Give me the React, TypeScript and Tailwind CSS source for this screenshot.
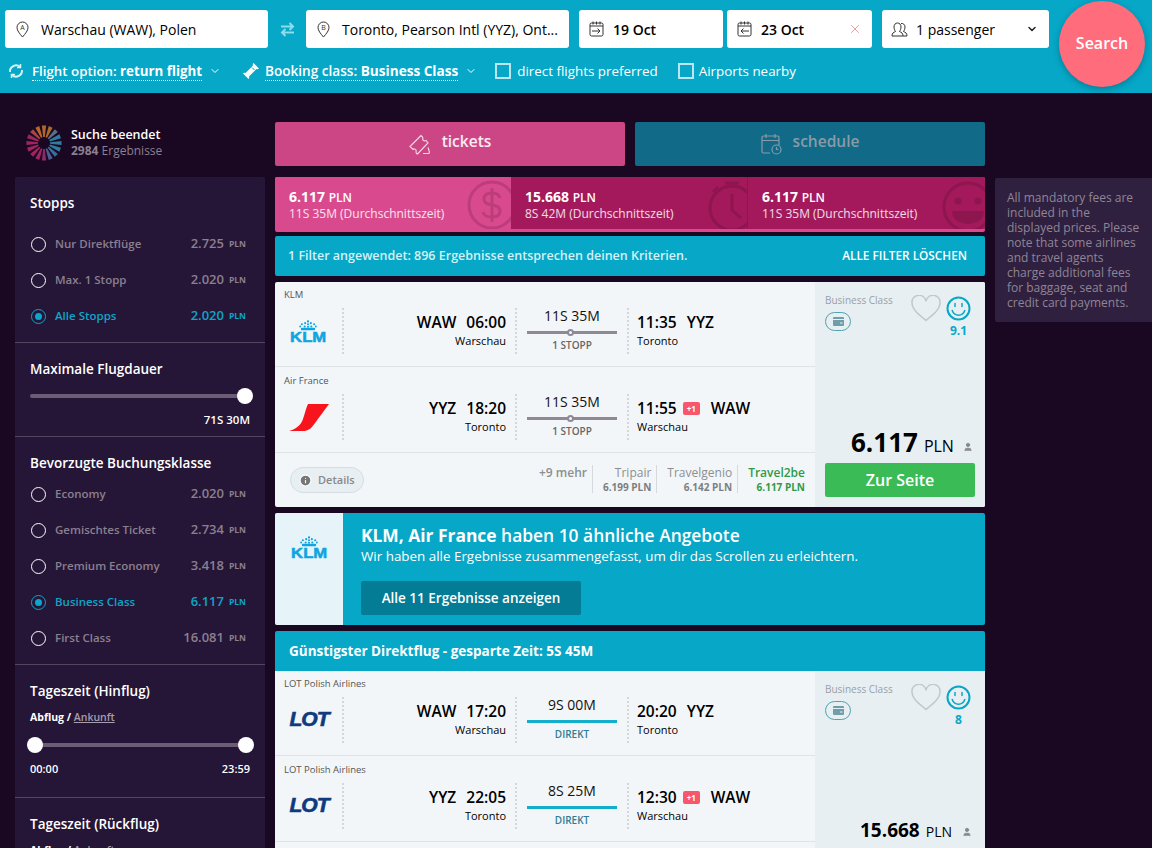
import React from "react";
import { ChevronDown, X, User, Info } from "lucide-react";

// Small inline icons
const Pin = ({ letter }: { letter: string }) => (
  <svg width="13" height="17" viewBox="0 0 13 17" className="shrink-0" fill="none">
    <path d="M6.5 16C3.5 12.5 1 9.6 1 6.5a5.5 5.5 0 0 1 11 0c0 3.1-2.500 6-5.500 9.500z" stroke="#333" strokeWidth="1" />
    <text x="6.500" y="9" textAnchor="middle" fontSize="7" fill="#333" fontFamily="Open Sans, sans-serif">{letter}</text>
  </svg>
);

const CalendarArrow = ({ back }: { back?: boolean }) => (
  <svg width="15" height="16" viewBox="0 0 15 16" fill="none" stroke="#333" strokeWidth="1" className="shrink-0">
    <rect x="1" y="2" width="13" height="13" rx="1.500" />
    <path d="M1 5h13M4 0.500v3M7.500 0.500v3M11 0.500v3" />
    {back ? <path d="M12 10H4M6.500 7.500 4 10l2.500 2.500" /> : <path d="M3 10h8M8.500 7.500 11 10l-2.500 2.500" />}
  </svg>
);

const Checkbox = () => <span className="w-[16px] h-[16px] border-2 border-[#b9e6f0] shrink-0" />;

const Heart = () => (
  <svg width="30" height="27" viewBox="0 0 30 27" fill="none" stroke="#c4c8cb" strokeWidth="1.500">
    <path d="M15 25.500C8 19.500 1 14.500 1 8a7 7 0 0 1 14-1.500A7 7 0 0 1 29 8c0 6.500-7 11.500-14 17.500z" />
  </svg>
);

const Smile = () => (
  <svg width="25" height="25" viewBox="0 0 25 25" fill="none" stroke="#08a7c8" strokeWidth="2">
    <circle cx="12.500" cy="12.500" r="11" />
    <path d="M6 14c1.200 3.600 3.600 5.200 6.500 5.200s5.300-1.600 6.500-5.200" strokeWidth="1.500" />
    <path d="M9 7.500v3M16 7.500v3" strokeWidth="1.500" strokeLinecap="round" />
  </svg>
);

const Spinner = () => {
  const colors = ["#b5662a", "#a86a2c", "#5c6f86", "#2f7ca0", "#2f7ca0", "#2f7ca0", "#35719a", "#4d5f90", "#8c2a6b", "#a0255f", "#a0255f", "#a0255f", "#a0255f", "#96285f", "#a8483f", "#b5662a"];
  return (
    <svg width="36" height="36" viewBox="0 0 36 36" className="shrink-0">
      {colors.map((c, i) => (
        <path key={i} d="M15.900 0.500h4.200l-1.300 11.500h-1.600z" fill={c} transform={`rotate(${i * 22.500} 18 18)`} />
      ))}
    </svg>
  );
};

const KlmLogo = () => (
  <div className="flex flex-col items-center text-[#0ea5e0]">
    <svg width="18" height="11" viewBox="0 0 19 11" fill="#0ea5e0">
      <rect x="2" y="8" width="15" height="2.500" rx="1" />
      <circle cx="9.500" cy="1.200" r="1.200" />
      <circle cx="6.500" cy="3" r="1.100" />
      <circle cx="12.500" cy="3" r="1.100" />
      <circle cx="9.500" cy="4.200" r="1.100" />
      <circle cx="3" cy="4.200" r="1.100" />
      <circle cx="16" cy="4.200" r="1.100" />
      <circle cx="1.200" cy="6.500" r="1" />
      <circle cx="17.800" cy="6.500" r="1" />
      <circle cx="6" cy="6.500" r="1.100" />
      <circle cx="13" cy="6.500" r="1.100" />
      <circle cx="9.500" cy="6.800" r="1.100" />
    </svg>
    <span className="text-[14px] leading-[11px] mt-[1px] font-bold font-['Liberation_Sans',sans-serif] scale-x-[1.190] [-webkit-text-stroke:0.5px_#0ea5e0]">KLM</span>
  </div>
);

const AirFranceLogo = () => (
  <svg width="41" height="29" viewBox="0 0 41 29">
    <path d="M20 1H41L27 20C23 26 20 28 15 28H1C8 26 13 22 15 16C17 10 18 5 20 1z" fill="#f8141c" />
  </svg>
);

const LotLogo = () => (
  <span className="text-[#0f3a7e] text-[19.500px] leading-none font-bold italic font-['Liberation_Sans',sans-serif] tracking-[-1px] scale-x-[1.080] inline-block [-webkit-text-stroke:0.6px_#0f3a7e]">LOT</span>
);

function RadioRow({ label, price, active }: { label: string; price: string; active?: boolean }) {
  return (
    <div className={`flex items-center h-[36px] pr-[4px] ${active ? "text-[#0ba6c9]" : "text-[#8a808f]"}`}>
      <span className={`ml-[1px] w-[15px] h-[15px] rounded-full border flex items-center justify-center shrink-0 ${active ? "border-[#0ba6c9]" : "border-white"}`}>
        {active && <span className="w-[7px] h-[7px] rounded-full bg-[#0ba6c9]" />}
      </span>
      <span className="ml-[9px] text-[11.500px] font-semibold flex-1">{label}</span>
      <span className="text-[13px] font-semibold">{price}</span>
      <span className="ml-[5px] text-[8.500px] font-bold">PLN</span>
    </div>
  );
}

function Slider({ left }: { left?: boolean }) {
  return (
    <div className="relative h-[4px] bg-[#6b5d76] rounded-full">
      {left && <span className="absolute left-[-8px] top-[-6px] w-[16px] h-[16px] rounded-full bg-white" />}
      <span className="absolute right-[-8px] top-[-6px] w-[16px] h-[16px] rounded-full bg-white" />
    </div>
  );
}

function Sidebar() {
  return (
    <aside className="w-[250px] shrink-0">
      <div className="h-[55px] flex items-start pl-[11px] pt-[3px]">
        <Spinner />
        <div className="ml-[9px] text-[12px] leading-[16px] pt-[2px]">
          <p className="text-white text-[12.500px] font-semibold">Suche beendet</p>
          <p className="text-[#8a808f]"><span className="font-bold">2984</span> Ergebnisse</p>
        </div>
      </div>
      <div className="bg-[#251537] rounded-[2px] text-white">
        <section className="h-[166px] px-[15px] pt-[16px] border-b border-[#54465f]">
          <h3 className="text-[13.500px] leading-[20px] font-semibold mb-[13px]">Stopps</h3>
          <RadioRow label="Nur Direktflüge" price="2.725" />
          <RadioRow label="Max. 1 Stopp" price="2.020" />
          <RadioRow label="Alle Stopps" price="2.020" active />
        </section>
        <section className="h-[94px] px-[15px] pt-[16px] border-b border-[#54465f]">
          <h3 className="text-[13.500px] leading-[20px] font-semibold mb-[15px]">Maximale Flugdauer</h3>
          <div className="mr-[5px]"><Slider /></div>
          <p className="text-[11.500px] leading-[14px] font-semibold text-right mt-[15px]">71S 30M</p>
        </section>
        <section className="h-[228px] px-[15px] pt-[16px] border-b border-[#54465f]">
          <h3 className="text-[13.500px] leading-[20px] font-semibold mb-[3px]">Bevorzugte Buchungsklasse</h3>
          <RadioRow label="Economy" price="2.020" />
          <RadioRow label="Gemischtes Ticket" price="2.734" />
          <RadioRow label="Premium Economy" price="3.418" />
          <RadioRow label="Business Class" price="6.117" active />
          <RadioRow label="First Class" price="16.081" />
        </section>
        <section className="h-[133px] px-[15px] pt-[16px] border-b border-[#54465f]">
          <h3 className="text-[13.500px] leading-[20px] font-semibold mb-[9px]">Tageszeit (Hinflug)</h3>
          <p className="text-[10.500px] leading-[14px] font-bold">Abflug / <span className="font-semibold text-[#a79dad] underline">Ankunft</span></p>
          <div className="mt-[19px] ml-[5px] mr-[4px]"><Slider left /></div>
          <div className="flex justify-between text-[11px] leading-[14px] font-semibold mt-[15px]">
            <span>00:00</span>
            <span>23:59</span>
          </div>
        </section>
        <section className="h-[80px] px-[15px] pt-[16px]">
          <h3 className="text-[13.500px] leading-[20px] font-semibold mb-[9px]">Tageszeit (Rückflug)</h3>
          <p className="text-[10.500px] leading-[14px] font-bold">Abflug / <span className="font-semibold text-[#a79dad] underline">Ankunft</span></p>
        </section>
      </div>
    </aside>
  );
}

type Leg = {
  airline: string;
  logo: React.ReactNode;
  from: string;
  dep: string;
  fromCity: string;
  duration: string;
  stop: boolean;
  arr: string;
  plus?: boolean;
  to: string;
  toCity: string;
};

function FlightRow({ leg }: { leg: Leg }) {
  return (
    <div className="h-[86px] pt-[9px] first:h-[85px] first:pt-[8px] border-b border-[#dfe3e6]">
      <p className="pl-[9px] text-[9.500px] leading-[10px] text-[#555]">{leg.airline}</p>
      <div className="flex h-[46px] mt-[8px]">
        <div className="w-[69px] shrink-0 border-r-2 border-dotted border-[#d3d7da] flex items-center justify-center">{leg.logo}</div>
        <div className="w-[173px] shrink-0 border-r-2 border-dotted border-[#d3d7da] pr-[9px] text-right text-black">
          <p className="text-[15.500px] leading-[22px] font-semibold mt-[3px]">
            {leg.from}<span className="ml-[10px]">{leg.dep}</span>
          </p>
          <p className="text-[11px] leading-[15px]">{leg.fromCity}</p>
        </div>
        <div className="w-[112px] shrink-0 border-r-2 border-dotted border-[#d3d7da] flex flex-col items-center">
          <p className="text-[14px] leading-[18px] text-[#111] mt-[-1px]">{leg.duration}</p>
          <div className={`relative w-[90px] h-[3px] mt-[6px] ${leg.stop ? "bg-[#8f8896]" : "bg-[#13aecb]"}`}>
            {leg.stop && <span className="absolute left-[40px] top-[-2px] w-[7px] h-[7px] rounded-full border-2 border-[#8f8896] bg-[#f3f6f8]" />}
          </div>
          <p className={`text-[10px] leading-[12px] font-semibold mt-[5px] ${leg.stop ? "text-[#666]" : "text-[#2f7d94]"}`}>
            {leg.stop ? "1 STOPP" : "DIREKT"}
          </p>
        </div>
        <div className="pl-[8px] text-black">
          <p className="text-[15.500px] leading-[22px] font-semibold mt-[3px] flex items-center">
            {leg.arr}
            {leg.plus && <span className="ml-[6px] w-[17px] h-[13px] bg-[#f8566b] rounded-[2px] text-white text-[8px] leading-[13px] font-bold text-center">+1</span>}
            <span className={leg.plus ? "ml-[11px]" : "ml-[10px]"}>{leg.to}</span>
          </p>
          <p className="text-[11px] leading-[15px]">{leg.toCity}</p>
        </div>
      </div>
    </div>
  );
}

function PricePanel({ score, children }: { score: string; children: React.ReactNode }) {
  return (
    <div className="flex-1 bg-[#e8eff3] relative px-[10px] pt-[12px]">
      <p className="text-[10px] leading-[13px] text-[#9a9fa3]">Business Class</p>
      <div className="mt-[5px] w-[26px] h-[19px] rounded-full border border-[#4fa3ad] flex items-center justify-center">
        <svg width="11" height="9" viewBox="0 0 11 9">
          <rect width="11" height="9" rx="1" fill="#6f9ea8" />
          <path d="M0 2.500h11" stroke="#e8eff3" strokeWidth="1" />
          <path d="M7 6h2.500" stroke="#e8eff3" strokeWidth="1" />
        </svg>
      </div>
      <div className="absolute top-[13px] left-[96px]"><Heart /></div>
      <div className="absolute top-[14px] left-[131px] flex flex-col items-center">
        <Smile />
        <span className="text-[12px] leading-[15px] font-bold text-[#08a7c8] mt-[2px]">{score}</span>
      </div>
      {children}
    </div>
  );
}

function Vendor({ name, price, best }: { name: string; price: string; best?: boolean }) {
  return (
    <div className={`flex flex-col items-end h-[28px] ${best ? "text-[#2f9a4a] font-semibold" : "pr-[5px] border-r border-[#d6dadd] text-[#8b8f92]"}`}>
      <span className="text-[12px] leading-[15px]">{name}</span>
      <span className={`text-[10px] leading-[14px] font-bold ${best ? "" : "text-[#7c7f82]"}`}>{price}</span>
    </div>
  );
}

export default function App() {
  const klmLegs: Leg[] = [
    { airline: "KLM", logo: <KlmLogo />, from: "WAW", dep: "06:00", fromCity: "Warschau", duration: "11S 35M", stop: true, arr: "11:35", to: "YYZ", toCity: "Toronto" },
    { airline: "Air France", logo: <AirFranceLogo />, from: "YYZ", dep: "18:20", fromCity: "Toronto", duration: "11S 35M", stop: true, arr: "11:55", plus: true, to: "WAW", toCity: "Warschau" },
  ];
  const lotLegs: Leg[] = [
    { airline: "LOT Polish Airlines", logo: <LotLogo />, from: "WAW", dep: "17:20", fromCity: "Warschau", duration: "9S 00M", stop: false, arr: "20:20", to: "YYZ", toCity: "Toronto" },
    { airline: "LOT Polish Airlines", logo: <LotLogo />, from: "YYZ", dep: "22:05", fromCity: "Toronto", duration: "8S 25M", stop: false, arr: "12:30", plus: true, to: "WAW", toCity: "Warschau" },
  ];

  return (
    <div className="h-screen overflow-hidden bg-[#1a0823] font-['Open_Sans',sans-serif]">
      {/* Search header */}
      <header className="relative h-[93px] bg-[#06a7c7] pt-[10px] px-[5px]">
        <div className="flex items-center h-[38px] text-[14px] text-black">
          <div className="w-[263px] h-full bg-white rounded-[3px] flex items-center pl-[11px] gap-[12px]">
            <Pin letter="A" />
            <span>Warschau (WAW), Polen</span>
          </div>
          <div className="w-[38px] flex justify-center">
            <svg width="15" height="15" viewBox="0 0 15 15" fill="none" stroke="#8fdcec" strokeWidth="2">
              <path d="M1 4.500h12M9.500 1 13 4.500 9.500 8M14 10.500H2M5.500 7 2 10.500 5.500 14" />
            </svg>
          </div>
          <div className="w-[263px] h-full bg-white rounded-[3px] flex items-center pl-[11px] gap-[12px]">
            <Pin letter="B" />
            <span>Toronto, Pearson Intl (YYZ), Ont...</span>
          </div>
          <div className="ml-[10px] w-[144px] h-full bg-white rounded-[3px] flex items-center pl-[10px] gap-[9px] font-semibold">
            <CalendarArrow />
            <span>19 Oct</span>
          </div>
          <div className="ml-[4px] w-[145px] h-full bg-white rounded-[3px] flex items-center pl-[10px] pr-[10px] gap-[9px] font-semibold">
            <CalendarArrow back />
            <span className="flex-1">23 Oct</span>
            <X size={14} color="#d9594c" strokeWidth={1} />
          </div>
          <div className="ml-[10px] w-[167px] h-full bg-white rounded-[3px] flex items-center pl-[9px] pr-[11px] gap-[8px]">
            <svg width="17" height="15" viewBox="0 0 17 15" fill="none" stroke="#333" strokeWidth="1" className="shrink-0">
              <path d="M1 14c0-3 1.500-3.500 3.500-4.500C3.500 8 3 6.500 3 5c0-2.500 1.500-4 3.500-4S10 2.500 10 5c0 1.500-.5 3-1.500 4.500C10.500 10.500 12 11 12 14z" />
              <path d="M10 1.500c2-.5 4 1 4 3.500 0 1.500-.5 3-1.500 4.500 2 1 3.500 1.500 3.500 4.500h-4" />
            </svg>
            <span className="flex-1">1 passenger</span>
            <ChevronDown size={12} color="#222" strokeWidth={3} />
          </div>
        </div>

        <div className="flex items-center h-[22px] mt-[12px] text-white text-[13.400px]">
          <svg width="16" height="16" viewBox="0 0 16 16" fill="none" stroke="#d8f3f8" strokeWidth="2" className="ml-[3px] shrink-0">
            <path d="M2 9a6 6 0 0 1 10-5M14 7a6 6 0 0 1-10 5" />
            <path d="M12.500 1v3.500H9M3.500 15v-3.500H7" strokeWidth="1.500" />
          </svg>
          <span className="ml-[8px] text-[13.300px] font-semibold border-b border-dotted border-white leading-[18px]">Flight option: <span className="font-bold">return flight</span></span>
          <ChevronDown size={12} className="ml-[7px]" />
          <svg width="18" height="18" viewBox="0 0 18 18" className="ml-[21px] shrink-0">
            <path d="M11.500 1 17 6.500c-1 .8-1.500 1-2.500.5L7 14.500c.5 1 .3 1.700-.5 2.500L1 11.500c.8-.8 1.500-1 2.500-.5L11 3.500c-.5-1-.3-1.700.5-2.500z" fill="#f4fbfd" />
            <path d="M10 5.500l2.500 2.500" stroke="#06a7c7" strokeWidth="1" />
          </svg>
          <span className="ml-[5px] text-[13.600px] font-semibold border-b border-dotted border-white leading-[18px]">Booking class: <span className="font-bold">Business Class</span></span>
          <ChevronDown size={12} className="ml-[7px]" />
          <span className="ml-[18px] flex items-center"><Checkbox /></span>
          <span className="ml-[6px]">direct flights preferred</span>
          <span className="ml-[20px] flex items-center"><Checkbox /></span>
          <span className="ml-[5px]">Airports nearby</span>
        </div>

        <button className="absolute left-[1059px] top-[1px] w-[86px] h-[86px] rounded-full bg-[#ff6c7c] text-white text-[16px] font-semibold pb-[2px] shadow-[0_2px_6px_rgba(0,0,0,0.25)]">
          Search
        </button>
      </header>

      <main className="flex pt-[29px] pl-[15px]">
        <Sidebar />

        <div className="ml-[10px] w-[710px] shrink-0">
          {/* Tabs */}
          <div className="flex gap-[10px] h-[44px]">
            <div className="flex-1 bg-[#cc4585] rounded-[2px] flex items-center justify-center gap-[11px] text-white/90 text-[15.500px] font-semibold pb-[5px]">
              <svg width="22" height="21" viewBox="0 0 22 21" fill="none" stroke="#f3d5e3" strokeWidth="1.200" className="mt-[5px]">
                <path d="M12 1.500 1 12.500l3 3c1-1 2.500-.5 3 .5 .5 1-.5 2 .5 3.500l1 .5L19 9l-2-2.500c-1 .5-2.500.5-3-.5s0-2-.5-3z" />
                <path d="M14 19.500h6c.5-1 .5-2 0-3l-1-3" />
              </svg>
              tickets
            </div>
            <div className="flex-1 bg-[#106a88] rounded-[2px] flex items-center justify-center gap-[11px] text-[#8a9ba6] text-[15.500px] font-semibold pb-[5px]">
              <svg width="21" height="22" viewBox="0 0 21 22" fill="none" stroke="#8a9ba6" strokeWidth="1.200" className="mt-[5px]">
                <path d="M9 20H2.500A1.500 1.500 0 0 1 1 18.500V4.500A1.500 1.500 0 0 1 2.500 3h14A1.500 1.500 0 0 1 18 4.500V12M1 7.500h17M5 1v4M14 1v4" />
                <circle cx="15.500" cy="16.500" r="4.500" />
                <path d="M15.500 14v2.500h2" />
              </svg>
              schedule
            </div>
          </div>

          {/* Price summary */}
          <div className="mt-[11px] h-[55px] rounded-[2px] overflow-hidden flex bg-[#d84a8d] text-white pb-[3px]">
            <div className="relative w-[236px] bg-[#d84a8d] pl-[14px] pt-[11px] overflow-hidden">
              <p className="text-[14px] leading-[17px] font-bold">6.117 <span className="text-[12px] font-semibold">PLN</span></p>
              <p className="text-[12px] leading-[16px] text-white/85">11S 35M (Durchschnittszeit)</p>
              <svg width="50" height="50" viewBox="0 0 50 50" fill="none" stroke="#bd3d7a" strokeWidth="3" className="absolute left-[192px] top-[3px]">
                <circle cx="25" cy="25" r="23" />
                <path d="M33 18c-1-4-4-5-8-5-5 0-8 2-8 6s3 5 8 6 8 2 8 6-3 6-8 6-8-1-9-5M25 8v34" />
              </svg>
            </div>
            <div className="relative w-[237px] bg-[#a3195b] pl-[14px] pt-[11px] overflow-hidden border-r border-[#8e164f]">
              <p className="text-[14px] leading-[17px] font-bold">15.668 <span className="text-[12px] font-semibold">PLN</span></p>
              <p className="text-[12px] leading-[16px] text-white/85">8S 42M (Durchschnittszeit)</p>
              <svg width="44" height="52" viewBox="0 0 44 52" fill="none" stroke="#8e164f" strokeWidth="3" className="absolute left-[197px] top-[3px]">
                <circle cx="24" cy="28" r="22" />
                <path d="M24 14v16l9 8M17 3h14M24 3v5M5 12l5-5" />
              </svg>
            </div>
            <div className="relative flex-1 bg-[#a3195b] pl-[14px] pt-[11px] overflow-hidden">
              <p className="text-[14px] leading-[17px] font-bold">6.117 <span className="text-[12px] font-semibold">PLN</span></p>
              <p className="text-[12px] leading-[16px] text-white/85">11S 35M (Durchschnittszeit)</p>
              <svg width="52" height="52" viewBox="0 0 52 52" fill="none" stroke="#8e164f" strokeWidth="3" className="absolute left-[194px] top-[4px]">
                <circle cx="26" cy="26" r="24" />
                <circle cx="16" cy="20" r="3.500" fill="#8e164f" stroke="none" />
                <circle cx="36" cy="20" r="3.500" fill="#8e164f" stroke="none" />
                <path d="M10 30h32c0 8-7 13-16 13s-16-5-16-13z" fill="#8e164f" stroke="none" />
              </svg>
            </div>
          </div>

          {/* Filter notice */}
          <div className="mt-[4px] h-[40px] bg-[#06a7c7] rounded-[2px] flex items-center justify-between pl-[13px] pr-[18px] font-semibold">
            <span className="text-[12.500px] text-[#d5f1f6]">1 Filter angewendet: 896 Ergebnisse entsprechen deinen Kriterien.</span>
            <span className="text-[11.800px] text-white">ALLE FILTER LÖSCHEN</span>
          </div>

          {/* First result */}
          <div className="mt-[6px] h-[225px] bg-[#f3f6f8] rounded-[2px] overflow-hidden flex">
            <div className="w-[540px] shrink-0">
              {klmLegs.map((leg) => <FlightRow key={leg.airline} leg={leg} />)}
              <div className="flex items-start pl-[15px] pt-[12px] pr-[10px]">
                <div className="mt-[2px] w-[74px] h-[26px] rounded-full bg-[#e8eff3] border border-[#d5dde1] flex items-center pl-[8px] gap-[6px] text-[#888] text-[11px] font-semibold">
                  <Info size={13} color="#fff" fill="#777" />
                  Details
                </div>
                <div className="flex-1 flex justify-end gap-[10px]">
                  <div className="border-r border-[#d6dadd] pr-[5px] h-[28px] text-[12px] leading-[15px] font-semibold text-[#8b8f92]">+9 mehr</div>
                  <Vendor name="Tripair" price="6.199 PLN" />
                  <Vendor name="Travelgenio" price="6.142 PLN" />
                  <Vendor name="Travel2be" price="6.117 PLN" best />
                </div>
              </div>
            </div>
            <PricePanel score="9.1">
              <div className="absolute left-[36px] top-[143px] flex items-baseline text-black">
                <span className="text-[26px] leading-[34px] font-bold">6.117</span>
                <span className="ml-[6px] text-[16px] font-medium">PLN</span>
                <User size={10} className="ml-[9px] text-[#888]" fill="#888" />
              </div>
              <button className="absolute left-[10px] top-[181px] w-[150px] h-[34px] rounded-[2px] bg-[#3abb55] text-white text-[16px] font-semibold">
                Zur Seite
              </button>
            </PricePanel>
          </div>

          {/* Grouped offers */}
          <div className="mt-[6px] h-[112px] rounded-[2px] overflow-hidden flex bg-[#06a7c7] text-white">
            <div className="w-[68px] shrink-0 bg-[#e6f4fa] flex justify-center pt-[23px]">
              <div><KlmLogo /></div>
            </div>
            <div className="pl-[18px] pt-[10px]">
              <p className="text-[17.400px] leading-[24px]"><span className="font-bold">KLM, Air France</span> <span className="font-semibold">haben 10 ähnliche Angebote</span></p>
              <p className="text-[13.400px] leading-[19px]">Wir haben alle Ergebnisse zusammengefasst, um dir das Scrollen zu erleichtern.</p>
              <button className="mt-[15px] w-[220px] h-[34px] rounded-[2px] bg-[#047c96] text-[13.500px] font-semibold">
                Alle 11 Ergebnisse anzeigen
              </button>
            </div>
          </div>

          {/* Cheapest direct flight */}
          <div className="mt-[6px] rounded-[2px] overflow-hidden">
            <div className="h-[40px] bg-[#06a7c7] flex items-center pl-[14px] text-white text-[13.500px] font-bold">
              Günstigster Direktflug - gesparte Zeit: 5S 45M
            </div>
            <div className="h-[230px] bg-[#f3f6f8] flex">
              <div className="w-[540px] shrink-0">
                {lotLegs.map((leg) => <FlightRow key={leg.dep} leg={leg} />)}
              </div>
              <PricePanel score="8">
                <div className="absolute left-[45px] top-[146px] flex items-baseline text-black">
                  <span className="text-[19px] leading-[26px] font-bold">15.668</span>
                  <span className="ml-[6px] text-[14px] font-medium">PLN</span>
                  <User size={10} className="ml-[10px] text-[#888]" fill="#888" />
                </div>
              </PricePanel>
            </div>
          </div>
        </div>

        {/* Fee note */}
        <div className="ml-[10px] mt-[56px] h-[144px] w-[157px] shrink-0 bg-[#30203f] rounded-l-[2px] pl-[12px] pt-[12px] pr-[12px] text-[12px] leading-[15px] text-[#8f8596]">
          All mandatory fees are included in the displayed prices. Please note that some airlines and travel agents charge additional fees for baggage, seat and credit card payments.
        </div>
      </main>
    </div>
  );
}
